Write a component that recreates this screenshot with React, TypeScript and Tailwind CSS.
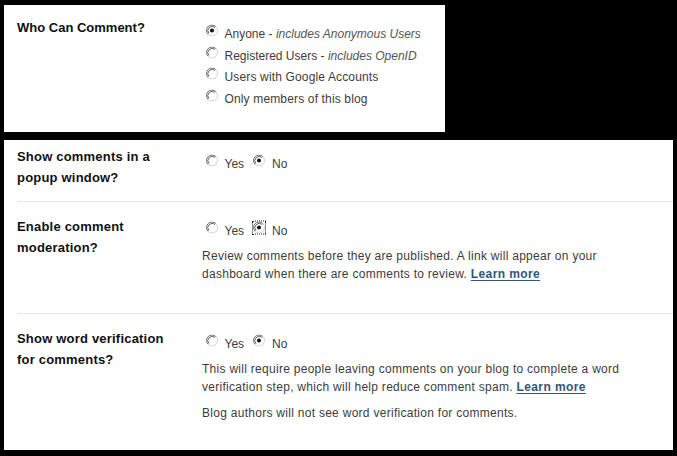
import React from "react";

function Radio({ checked = false, focus = false }: { checked?: boolean; focus?: boolean }) {
  return (
    <span
      className={
        focus
          ? "inline-flex h-[14px] w-[14px] shrink-0 -translate-y-[1.5px] items-center justify-center border border-dotted border-[#222]"
          : "inline-flex h-[14px] w-[14px] shrink-0 -translate-y-[1.5px] items-center justify-center border border-transparent"
      }
    >
      <svg width="12" height="12" viewBox="0 0 12 12">
        <circle cx="6" cy="6" r="5.5" fill="#ffffff" />
        <path d="M2.11 9.89 A5.5 5.5 0 0 1 9.89 2.11" stroke="#6f6f6f" strokeWidth="1" fill="none" />
        <path d="M9.89 2.11 A5.5 5.5 0 0 1 2.11 9.89" stroke="#d0d0d0" strokeWidth="1" fill="none" />
        <path d="M2.9 9.1 A4.4 4.4 0 0 1 9.1 2.9" stroke="#3a3a3a" strokeWidth="0.8" fill="none" />
        {checked && <circle cx="6" cy="6" r="2" fill="#111111" />}
      </svg>
    </span>
  );
}

function YesNo({ focusNo = false }: { focusNo?: boolean }) {
  return (
    <div className="flex h-[20px] items-center">
      <span className="ml-[2.5px]">
        <Radio />
      </span>
      <span className="ml-[6px]">Yes</span>
      <span className="ml-[8px]">
        <Radio checked focus={focusNo} />
      </span>
      <span className="ml-[6px]">No</span>
    </div>
  );
}

const learn = (
  <a className="font-bold tracking-[0.4px] text-[#335577] underline decoration-[#335577] underline-offset-2">
    Learn more
  </a>
);

export default function App() {
  return (
    <div
      className="flex min-h-[456px] w-[677px] flex-col bg-black pl-[4px] pt-[5px] text-[12px] text-[#3c3c3c]"
      style={{ fontFamily: '"Liberation Sans", Arial, sans-serif' }}
    >
      {/* Top panel */}
      <div className="flex h-[127px] w-[441px] bg-white">
        <div className="w-[198px] pl-[13px] pt-[11.5px] text-[13px] font-bold leading-[21px] text-[#111]">
          Who Can Comment?
        </div>
        <div className="flex flex-col pt-[18.3px]">
          <div className="flex h-[21.5px] items-center">
            <span className="ml-[2.5px]">
              <Radio checked />
            </span>
            <span className="ml-[6px] whitespace-nowrap">
              Anyone - <i className="text-[#555]">includes Anonymous Users</i>
            </span>
          </div>
          <div className="flex h-[21.5px] items-center">
            <span className="ml-[2.5px]">
              <Radio />
            </span>
            <span className="ml-[6px] whitespace-nowrap">
              Registered Users - <i className="text-[#555]">includes OpenID</i>
            </span>
          </div>
          <div className="flex h-[21.5px] items-center">
            <span className="ml-[2.5px]">
              <Radio />
            </span>
            <span className="ml-[6px] whitespace-nowrap tracking-[0.15px]">Users with Google Accounts</span>
          </div>
          <div className="flex h-[21.5px] items-center">
            <span className="ml-[2.5px]">
              <Radio />
            </span>
            <span className="ml-[6px] whitespace-nowrap tracking-[0.15px]">Only members of this blog</span>
          </div>
        </div>
      </div>

      {/* Bottom panel */}
      <div className="mt-[8px] flex h-[310px] w-[669px] flex-col overflow-hidden bg-white">
        {/* Section 1 */}
        <div className="flex pb-[13px] pt-[6px]">
          <div className="w-[198px] shrink-0 pl-[13px] text-[13px] font-bold leading-[21px] tracking-[0.2px] text-[#111]">
            Show comments in a
            <br />
            popup window?
          </div>
          <div className="pt-[8px]">
            <YesNo />
          </div>
        </div>
        <div className="ml-[13px] h-px bg-[#e8e8e8]" />

        {/* Section 2 */}
        <div className="flex pb-[13px] pt-[14px]">
          <div className="w-[198px] shrink-0 pl-[13px] text-[13px] font-bold leading-[21px] tracking-[0.2px] text-[#111]">
            Enable comment
            <br />
            moderation?
          </div>
          <div className="pt-[5px]">
            <YesNo focusNo />
            <p className="mb-[17px] mt-[6px] whitespace-nowrap leading-[18px] tracking-[0.28px]">
              Review comments before they are published. A link will appear on your
              <br />
              dashboard when there are comments to review. {learn}
            </p>
          </div>
        </div>
        <div className="ml-[13px] h-px bg-[#e8e8e8]" />

        {/* Section 3 */}
        <div className="flex pb-[13px] pt-[14px]">
          <div className="w-[198px] shrink-0 pl-[13px] text-[13px] font-bold leading-[21px] tracking-[0.2px] text-[#111]">
            Show word verification
            <br />
            for comments?
          </div>
          <div className="pt-[6px]">
            <YesNo />
            <p className="mt-[6px] whitespace-nowrap leading-[18px] tracking-[0.28px]">
              This will require people leaving comments on your blog to complete a word
              <br />
              verification step, which will help reduce comment spam. {learn}
            </p>
            <p className="mt-[8px] whitespace-nowrap leading-[18px] tracking-[0.28px]">
              Blog authors will not see word verification for comments.
            </p>
          </div>
        </div>
      </div>
    </div>
  );
}
